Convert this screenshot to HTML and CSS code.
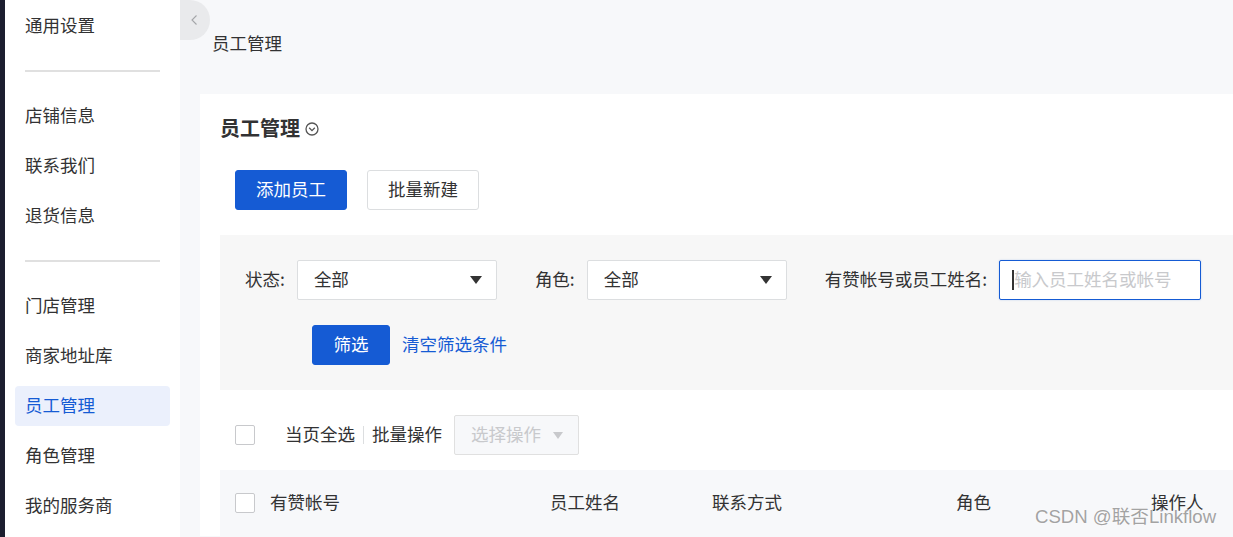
FILE: index.html
```html
<!DOCTYPE html>
<html lang="zh-CN">
<head>
<meta charset="utf-8">
<title>员工管理</title>
<link rel="stylesheet" href="styles.css">
</head>
<body>
<div class="app">
  <div class="strip"></div>
  <nav class="sidebar">
    <div class="nav-item">通用设置</div>
    <div class="nav-divider"></div>
    <div class="nav-item">店铺信息</div>
    <div class="nav-item">联系我们</div>
    <div class="nav-item">退货信息</div>
    <div class="nav-divider"></div>
    <div class="nav-item">门店管理</div>
    <div class="nav-item">商家地址库</div>
    <div class="nav-item active">员工管理</div>
    <div class="nav-item">角色管理</div>
    <div class="nav-item">我的服务商</div>
  </nav>
  <main class="main">
    <div class="collapse-tab">
      <svg width="8" height="12" viewBox="0 0 8 12"><path d="M6.5 1.5 L2 6 L6.5 10.5" fill="none" stroke="#a3a5a8" stroke-width="1.1"/></svg>
    </div>
    <div class="breadcrumb">员工管理</div>
    <section class="card">
      <h1 class="title">员工管理
        <svg class="title-icon" width="14" height="14" viewBox="0 0 14 14"><circle cx="7" cy="7" r="6" fill="none" stroke="#555" stroke-width="1.3"/><path d="M4.2 5.8 L7 8.6 L9.8 5.8" fill="none" stroke="#555" stroke-width="1.3"/></svg>
      </h1>
      <div class="actions">
        <button class="btn btn-primary">添加员工</button>
        <button class="btn btn-default">批量新建</button>
      </div>
      <div class="filter">
        <div class="filter-row">
          <div class="field">
            <span class="field-label">状态:</span>
            <div class="select"><span class="select-text">全部</span><i class="caret"></i></div>
          </div>
          <div class="field">
            <span class="field-label">角色:</span>
            <div class="select"><span class="select-text">全部</span><i class="caret"></i></div>
          </div>
          <div class="field">
            <span class="field-label">有赞帐号或员工姓名:</span>
            <div class="input"><i class="cursor"></i><span class="placeholder">输入员工姓名或帐号</span></div>
          </div>
        </div>
        <div class="filter-row submit-row">
          <button class="btn btn-primary btn-filter">筛选</button>
          <a class="link">清空筛选条件</a>
        </div>
      </div>
      <div class="batch">
        <span class="checkbox"></span>
        <span class="batch-text">当页全选</span>
        <span class="sep"></span>
        <span class="batch-text">批量操作</span>
        <div class="select select-disabled"><span class="select-text">选择操作</span><i class="caret"></i></div>
      </div>
      <div class="table-head">
        <div class="th th-first"><span class="checkbox"></span><span class="th-text">有赞帐号</span></div>
        <div class="th"><span class="th-text">员工姓名</span></div>
        <div class="th"><span class="th-text">联系方式</span></div>
        <div class="th"><span class="th-text">角色</span></div>
        <div class="th"><span class="th-text">操作人</span></div>
      </div>
    </section>
  </main>
  <div class="watermark">CSDN @联否Linkflow</div>
</div>
</body>
</html>
```
FILE: styles.css
```css
html, body {
  margin: 0;
  padding: 0;
  overflow: hidden;
}
body {
  font-family: "Noto Sans CJK SC", "Noto Sans", sans-serif;
  font-size: 17.5px;
  color: #323233;
  background: #f7f8fa;
}
.app {
  position: relative;
  display: flex;
  width: 1300px;
  height: 537px;
  overflow: hidden;
}
.strip {
  width: 5px;
  flex: none;
  background: #1c1e2f;
}
.sidebar {
  width: 155px;
  flex: none;
  background: #fff;
  padding: 6px 10px 0;
  display: flex;
  flex-direction: column;
  gap: 10px;
}
.nav-item {
  height: 40px;
  line-height: 38px;
  padding-left: 10px;
  border-radius: 4px;
  white-space: nowrap;
}
.nav-item.active {
  background: #ebf0fc;
  color: #155bd4;
}
.nav-divider {
  height: 2px;
  margin: 14px 10px;
  background: #e0e0e0;
}
.main {
  position: relative;
  flex: 1;
  padding: 0 0 0 20px;
  background: #f7f8fa;
}
.collapse-tab {
  position: absolute;
  left: 0;
  top: 0;
  width: 30px;
  height: 40px;
  border-radius: 0 20px 20px 0;
  background: #e9eaec;
  display: flex;
  align-items: center;
  padding-left: 10px;
  box-sizing: border-box;
}
.breadcrumb {
  height: 94px;
  box-sizing: border-box;
  padding: 32px 0 0 12px;
  line-height: 22px;
  color: #323233;
}
.card {
  background: #fff;
  padding: 22px 20px 0;
}
.title {
  margin: 0;
  font-size: 20px;
  font-weight: 700;
  line-height: 24px;
  display: flex;
  align-items: center;
  color: #323233;
}
.title-icon {
  margin-left: 5px;
  margin-top: 1px;
}
.actions {
  display: flex;
  gap: 20px;
  padding: 30px 0 0 15px;
}
.btn {
  height: 40px;
  width: 112px;
  border-radius: 3px;
  font-family: inherit;
  font-size: 17.5px;
  padding: 0 0 3px;
  cursor: pointer;
}
.btn-primary {
  background: #155bd4;
  color: #fff;
  border: 1px solid #155bd4;
}
.btn-default {
  background: #fff;
  color: #323233;
  border: 1px solid #dcdee0;
}
.filter {
  margin-top: 25px;
  background: #f7f7f7;
  padding: 25px 0 25px 25px;
  display: flex;
  flex-direction: column;
  gap: 25px;
}
.filter-row {
  display: flex;
  align-items: center;
}
.field {
  display: flex;
  align-items: center;
  margin-right: 38px;
}
.field-label {
  margin-right: 12px;
  padding-bottom: 3px;
  white-space: nowrap;
}
.select {
  position: relative;
  width: 200px;
  height: 40px;
  box-sizing: border-box;
  background: #fff;
  border: 1px solid #dcdee0;
  border-radius: 2px;
  padding-left: 16px;
  display: flex;
  align-items: center;
}
.select-text {
  padding-bottom: 3px;
}
.caret {
  position: absolute;
  right: 14px;
  top: 15px;
  width: 0;
  height: 0;
  border-left: 6px solid transparent;
  border-right: 6px solid transparent;
  border-top: 8px solid #333;
}
.input {
  width: 202px;
  height: 40px;
  box-sizing: border-box;
  background: #fff;
  border: 1px solid #155bd4;
  border-radius: 2px;
  box-shadow: 0 0 2px rgba(21, 91, 212, 0.25);
  padding-left: 12px;
  display: flex;
  align-items: center;
}
.cursor {
  width: 2px;
  height: 20px;
  background: #333;
  flex: none;
}
.placeholder {
  color: #c8c9cc;
  white-space: nowrap;
  padding-bottom: 3px;
}
.submit-row {
  padding-left: 67px;
}
.btn-filter {
  width: 78px;
}
.link {
  margin-left: 12px;
  padding-bottom: 3px;
  color: #155bd4;
  cursor: pointer;
}
.batch {
  display: flex;
  align-items: center;
  margin-top: 25px;
  padding-left: 15px;
  height: 40px;
}
.batch-text {
  padding-bottom: 3px;
}
.checkbox {
  width: 20px;
  height: 20px;
  box-sizing: border-box;
  border: 1px solid #c8c9cc;
  border-radius: 2px;
  background: #fff;
  flex: none;
}
.batch .checkbox {
  margin-right: 30px;
}
.sep {
  width: 1px;
  height: 18px;
  background: #dcdee0;
  margin: 0 8px;
}
.select-disabled {
  width: 125px;
  margin-left: 12px;
  background: #f7f8fa;
  border-color: #e0e0e0;
  color: #c8c9cc;
}
.select-disabled .caret {
  right: 15px;
  top: 16px;
  border-left-width: 5px;
  border-right-width: 5px;
  border-top-width: 7px;
  border-top-color: #c8c9cc;
}
.table-head {
  margin-top: 15px;
  height: 66px;
  background: #f7f8fa;
  display: grid;
  grid-template-columns: 315px 162px 244px 195px 1fr;
  align-items: center;
  padding-left: 15px;
}
.th {
  white-space: nowrap;
  display: flex;
  align-items: center;
}
.th-text {
  padding-bottom: 3px;
}
.th-first .checkbox {
  margin-right: 15px;
}
.watermark {
  position: absolute;
  left: 1035px;
  top: 505px;
  font-family: "Liberation Sans", "Noto Sans CJK SC", sans-serif;
  font-size: 18.6px;
  line-height: 24px;
  color: #a3a3a3;
  text-shadow: 0 0 1px #fff, 0 0 2px #fff;
  white-space: nowrap;
}
```
